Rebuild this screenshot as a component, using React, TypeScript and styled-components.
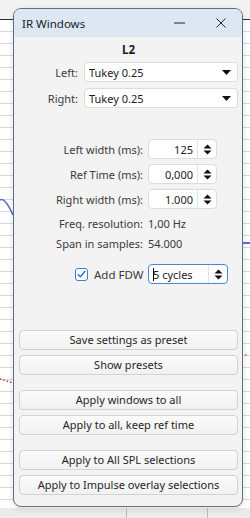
import React from 'react';
import styled, { createGlobalStyle } from 'styled-components';

const GlobalStyle = createGlobalStyle`
  html, body {
    margin: 0;
    padding: 0;
  }
  body {
    font-family: 'Noto Sans', 'Open Sans', sans-serif;
    font-size: 11px;
    color: #1f1f1f;
  }
`;

const Desktop = styled.div`
  position: relative;
  width: 250px;
  height: 518px;
  overflow: hidden;
  display: flex;
  flex-direction: column;
  background: #f3f3f3;
`;

const TopStrip = styled.div`
  height: 19px;
  border-bottom: 1px solid #2b2b2b;
  background: #f3f3f3;
`;

const ChartArea = styled.div`
  position: relative;
  flex: 1;
  background-color: #ffffff;
  background-image: repeating-linear-gradient(
    to bottom,
    transparent 0px,
    transparent 11px,
    #d9d9d9 11px,
    #d9d9d9 12px
  );
`;

const ChartDrawing = styled.svg`
  position: absolute;
  inset: 0;
  width: 100%;
  height: 100%;
`;

const BottomStrip = styled.div`
  height: 10px;
  background: #ebebeb;
  display: grid;
  grid-template-columns: 126px 81px 1fr;
  & > div + div {
    border-left: 1px solid #bdbdbd;
  }
`;

const Dialog = styled.div`
  position: absolute;
  left: 13px;
  top: 8px;
  width: 230px;
  height: 499px;
  box-sizing: border-box;
  border: 1px solid #5f6e84;
  border-radius: 8px;
  background: #f3f3f3;
  display: flex;
  flex-direction: column;
  overflow: hidden;
  box-shadow: 0 2px 6px rgba(0, 0, 0, 0.12);
`;

const TitleBar = styled.div`
  height: 28px;
  flex: none;
  background: #dde7f4;
  display: flex;
  align-items: center;
  padding-left: 8px;
`;

const TitleText = styled.div`
  flex: 1;
  font-size: 11.5px;
  color: #1b1b1b;
`;

const TitleButton = styled.div`
  width: 42px;
  height: 28px;
  display: flex;
  align-items: center;
  justify-content: center;
`;

const Body = styled.div`
  flex: 1;
  display: flex;
  flex-direction: column;
  padding: 5px 4px 0 5px;
`;

const ChannelName = styled.div`
  text-align: center;
  font-weight: 700;
  font-size: 11.5px;
  line-height: 16px;
  color: #1b1b1b;
  margin-bottom: 4px;
`;

const FormGrid = styled.div<{ labelWidth: number; gap: number; colGap: number }>`
  display: grid;
  grid-template-columns: ${p => p.labelWidth}px 1fr;
  column-gap: ${p => p.colGap}px;
  row-gap: ${p => p.gap}px;
  align-items: center;
`;

const Label = styled.div<{ pushed?: boolean }>`
  text-align: right;
  color: #3a3a3a;
  line-height: 15px;
  white-space: nowrap;
  margin-top: ${p => (p.pushed ? 2 : 0)}px;
`;

const Value = styled.div<{ pushed?: boolean }>`
  color: #3a3a3a;
  line-height: 15px;
  white-space: nowrap;
  margin-top: ${p => (p.pushed ? 2 : 0)}px;
`;

const Combo = styled.div`
  height: 20px;
  box-sizing: border-box;
  border: 1px solid #dcdcdc;
  border-radius: 4px;
  background: #ffffff;
  display: flex;
  align-items: center;
  padding: 0 6px 0 4px;
  color: #1b1b1b;
`;

const ComboText = styled.div`
  flex: 1;
`;

const SpinBox = styled.div<{ width: number; focused?: boolean }>`
  width: ${p => p.width}px;
  height: 20px;
  box-sizing: border-box;
  border: 1px solid ${p => (p.focused ? '#4a86d8' : '#dcdcdc')};
  border-radius: 4px;
  background: #ffffff;
  display: flex;
  align-items: stretch;
  color: #1b1b1b;
`;

const SpinValue = styled.div<{ align: 'left' | 'right' }>`
  flex: 1;
  display: flex;
  align-items: center;
  justify-content: ${p => (p.align === 'right' ? 'flex-end' : 'flex-start')};
  padding: 0 4px;
`;

const Caret = styled.span`
  display: inline-block;
  width: 1px;
  height: 13px;
  background: #111;
  margin-right: -1px;
`;

const SpinButtons = styled.div`
  width: 18px;
  border-left: 1px solid #e2e2e2;
  display: flex;
  align-items: center;
  justify-content: center;
`;

const Spacer = styled.div<{ h: number }>`
  height: ${p => p.h}px;
  flex: none;
`;

const FdwRow = styled.div`
  display: flex;
  align-items: center;
  padding-left: 56px;
`;

const CheckBox = styled.div`
  width: 13px;
  height: 13px;
  box-sizing: border-box;
  border: 1px solid #3f7fd6;
  border-radius: 3px;
  background: #ffffff;
  display: flex;
  align-items: center;
  justify-content: center;
  margin-right: 6px;
`;

const CheckLabel = styled.div`
  width: 54px;
  color: #3a3a3a;
  font-size: 11.5px;
`;

const ButtonGroup = styled.div`
  display: flex;
  flex-direction: column;
  gap: 5px;
`;

const Button = styled.button`
  height: 20px;
  box-sizing: border-box;
  border: 1px solid #d2d2d2;
  border-radius: 4px;
  background: linear-gradient(#fbfbfb, #f1f1f1);
  font-family: inherit;
  font-size: 11px;
  color: #1f1f1f;
  padding: 0;
  line-height: 18px;
`;

const DropArrow = () => (
  <svg width="9" height="5" viewBox="0 0 9 5">
    <polygon points="0,0 9,0 4.5,5" fill="#111" />
  </svg>
);

const SpinArrows = () => (
  <svg width="9" height="11" viewBox="0 0 9 11">
    <polygon points="0.5,4.5 4.5,0.5 8.5,4.5" fill="#111" />
    <polygon points="0.5,6.5 8.5,6.5 4.5,10.5" fill="#111" />
  </svg>
);

const spinRows = [
  { label: 'Left width (ms):', value: '125' },
  { label: 'Ref Time (ms):', value: '0,000' },
  { label: 'Right width (ms):', value: '1.000' },
];

const buttonGroups = [
  ['Save settings as preset', 'Show presets'],
  ['Apply windows to all', 'Apply to all, keep ref time'],
  ['Apply to All SPL selections', 'Apply to Impulse overlay selections'],
];

export default function App() {
  return (
    <>
      <GlobalStyle />
      <Desktop>
        <TopStrip />
        <ChartArea>
          <ChartDrawing viewBox="0 0 250 488" preserveAspectRatio="none">
            <path d="M0,180 Q5,177 13,195" fill="none" stroke="#5f63d0" strokeWidth="1.5" />
            <line x1="243" y1="223" x2="250" y2="223" stroke="#6a6ad8" strokeWidth="2" />
            <line x1="0" y1="359" x2="13" y2="363" stroke="#d33" strokeWidth="1.5" strokeDasharray="1.5 2" />
            <line x1="245" y1="335" x2="248" y2="335" stroke="#d55" strokeWidth="1.5" strokeDasharray="1.5 2" />
          </ChartDrawing>
        </ChartArea>
        <BottomStrip>
          <div />
          <div />
          <div />
        </BottomStrip>

        <Dialog>
          <TitleBar>
            <TitleText>IR Windows</TitleText>
            <TitleButton>
              <svg width="11" height="2" viewBox="0 0 11 2">
                <line x1="0" y1="1" x2="11" y2="1" stroke="#222" strokeWidth="1" />
              </svg>
            </TitleButton>
            <TitleButton>
              <svg width="10" height="10" viewBox="0 0 10 10">
                <path d="M0.5,0.5 L9.5,9.5 M9.5,0.5 L0.5,9.5" stroke="#222" strokeWidth="1" />
              </svg>
            </TitleButton>
          </TitleBar>

          <Body>
            <ChannelName>L2</ChannelName>
            <FormGrid labelWidth={59} gap={6} colGap={6}>
              <Label>Left:</Label>
              <Combo>
                <ComboText>Tukey 0.25</ComboText>
                <DropArrow />
              </Combo>
              <Label>Right:</Label>
              <Combo>
                <ComboText>Tukey 0.25</ComboText>
                <DropArrow />
              </Combo>
            </FormGrid>

            <Spacer h={31} />

            <FormGrid labelWidth={124} gap={5} colGap={5}>
              {spinRows.map(r => (
                <React.Fragment key={r.label}>
                  <Label>{r.label}</Label>
                  <SpinBox width={69}>
                    <SpinValue align="right">{r.value}</SpinValue>
                    <SpinButtons>
                      <SpinArrows />
                    </SpinButtons>
                  </SpinBox>
                </React.Fragment>
              ))}
              <Label pushed>Freq. resolution:</Label>
              <Value pushed>1,00 Hz</Value>
              <Label>Span in samples:</Label>
              <Value>54.000</Value>
            </FormGrid>

            <Spacer h={13} />

            <FdwRow>
              <CheckBox>
                <svg width="9" height="8" viewBox="0 0 9 8">
                  <path d="M0.8,4.2 L3.4,6.8 L8.2,1" fill="none" stroke="#2f6fcf" strokeWidth="1.4" />
                </svg>
              </CheckBox>
              <CheckLabel>Add FDW</CheckLabel>
              <SpinBox width={80} focused>
                <SpinValue align="left">
                  <Caret />5 cycles
                </SpinValue>
                <SpinButtons>
                  <SpinArrows />
                </SpinButtons>
              </SpinBox>
            </FdwRow>

            <Spacer h={46} />

            {buttonGroups.map((group, i) => (
              <React.Fragment key={i}>
                {i > 0 && <Spacer h={15} />}
                <ButtonGroup>
                  {group.map(b => (
                    <Button key={b}>{b}</Button>
                  ))}
                </ButtonGroup>
              </React.Fragment>
            ))}
          </Body>
        </Dialog>
      </Desktop>
    </>
  );
}
